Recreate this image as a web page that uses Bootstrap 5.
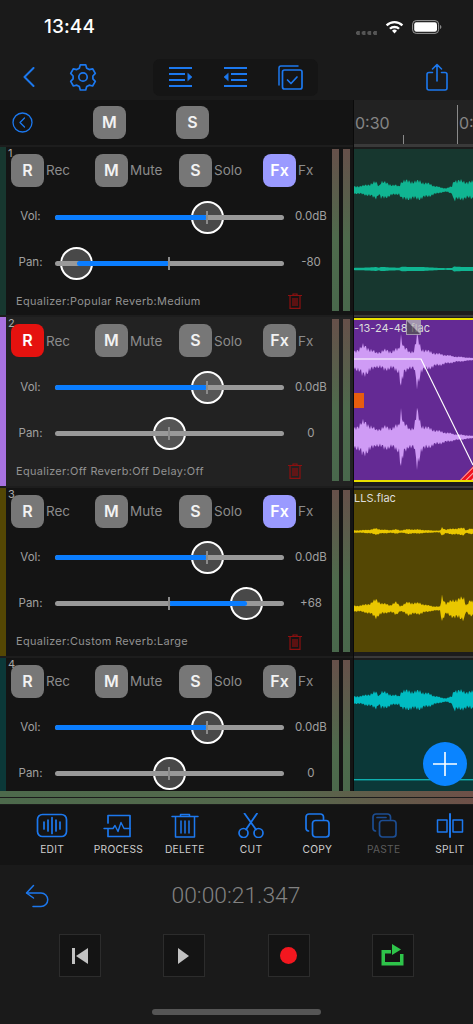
<!DOCTYPE html>
<html lang="en">
<head>
<meta charset="utf-8">
<title>Mixer</title>
<link href="https://cdn.jsdelivr.net/npm/bootstrap@5.3.0/dist/css/bootstrap.min.css" rel="stylesheet">
<style>
html,body{background:#1a1a1a;margin:0;height:1024px;overflow:hidden}
body{font-family:Inter,"Liberation Sans",sans-serif;color:#999;width:473px}
svg{display:block;flex:none}
.ic{fill:none;stroke:#1c78ee;stroke-width:1.7;stroke-linecap:round;stroke-linejoin:round}
.stbar{height:54px;padding:0 31px 0 44px}
.clock{font-size:19px;font-weight:500;color:#fff;letter-spacing:.1px}
.dots{width:22px;height:4px;margin-top:11px;margin-right:7px;background:radial-gradient(circle at 2px 2px,#555 2px,transparent 2.2px) 0 0/5.7px 4px}
.navrow{height:46px;padding-left:23px}
.gearbox{margin-left:34px}
.seg{width:165px;height:37px;margin:0 0 0 56px;background:#151515;border-radius:7px;padding:0 15px}
.sharebox{margin-left:108px}
.stage{height:691px;overflow:hidden}
.mixer{width:354px;border-right:1px solid #0a0a0a;flex:none}
.mixhead{height:45px;background:#141414;padding-left:12px}
.hm{margin-left:60px}
.hs{margin-left:50px}
.tbtn{width:33px;height:33px;border-radius:8px;background:#777;color:#f2f2f2;font-size:16px;font-weight:600;line-height:33px;text-align:center;padding:0;border:0;flex:none}
.tbtn.on-rec{background:#e5120f;color:#fff}
.tbtn.on-fx{background:#9a9aff;color:#fff}
.tr{height:170.3px;background:#141414;border-top:2px solid #1d1d1d}
.tr.sel{background:#222}
.stripe{width:6px;flex:none}
.trbody{width:326px;flex:none}
.num{position:absolute;left:2px;top:0;font-size:11px;line-height:13px;color:#aaa}
.btnline{padding:7px 0 7px 5px;height:47px}
.bgroup{width:84px;flex:none;gap:2px;font-size:13.5px;color:#8b8b8b}
.srow{height:46px}
.slab{width:49px;text-align:center;font-size:11.5px;color:#a0a0a0;flex:none}
.slid{position:relative;width:229px;height:5px;flex:none}
.rail,.fill{position:absolute;top:0;bottom:0;border-radius:3px}
.rail{left:0;right:0;background:#999}
.fill{background:#0a7dff}
.thumb{position:absolute;top:-14px;width:33px;height:33px;margin-left:-16.5px;border-radius:50%;border:2px solid #fff;background:#484848}
.sel .thumb{background:#555}
.tick{position:absolute;top:-4px;width:2px;height:13px;margin-left:-1px;background:#8a8a8a}
.sval{width:48px;padding-left:6px;text-align:center;font-size:11.5px;color:#a0a0a0;flex:none;white-space:nowrap}
.inforow{height:24px;margin-top:3px;padding:0 30px 0 10px;font-size:10.9px;letter-spacing:.35px;color:#929292}
.meters{gap:3.5px;padding:2px 0 0 0;width:21px;flex:none}
.vm{width:7px;height:162px;background:linear-gradient(#66504a,#4e6a4c 55%,#49684c)}
.lanes{width:119px;flex:none;position:relative;background:#202020}
.ruler{height:45px;background:#222;position:relative;border-bottom:1px solid #3a3a3a}
.rt{position:absolute;top:13px;font-size:16px;line-height:20px;color:#858585;white-space:nowrap}
.rmark{position:absolute;width:1px;background:#8a8a8a;bottom:0}
.lane{height:170.3px;padding-top:2px;background:#1c1c1c;border-top:2px solid #3a3a3a;overflow:hidden}
.clip{position:relative;height:162px;overflow:hidden}
.c1{background:#17372f}
.c2{background:#642a94;border-top:2px solid #e8e000;border-bottom:2px solid #e8e000;height:164px;margin-top:-1px}
.c3{background:#544704}
.c4{background:#0b3838;height:140px}
.cname{position:absolute;top:1px;left:0;font-size:11px;line-height:14px;color:#dcdcdc;white-space:nowrap}
.cover{left:52px;opacity:.75}
.fab{position:absolute;left:69px;top:642px;width:44px;height:44px;border-radius:50%;background:#0a84ff;border:0;padding:0}
.hbars{height:14px;background:#1c1c1c}
.hb{height:6px;margin-bottom:1px;background:linear-gradient(90deg,#4d6a4c,#55684c 60%,#6e5048)}
.tools{height:60px;background:#141414;padding-left:19px}
.tool{width:66.3px;flex:none;padding-top:8px;font-size:10.2px;letter-spacing:.25px;color:#cfcfcf;text-align:center}
.tool svg{margin:0 auto 4px}
.tool.off{color:#5c5c5c}
.paste{stroke:#1c4d92}
.timebar{height:66px;padding:0 0 4px 25px}
.timer{flex:1;text-align:center;font-family:Roboto,"Liberation Sans",sans-serif;font-weight:300;font-size:22.8px;color:#828282;margin-right:27px;margin-left:-23px}
.ctrls{padding-left:59px;gap:62.3px;margin-top:3px}
.cbtn{width:42px;height:43px;background:#141414;border:1px solid #2c2c2c;border-radius:0;padding:0}
.homebar{width:169px;height:6px;background:#555;border-radius:3px;margin:32px 0 0 152px}
</style>
</head>
<body>
<div class="stbar d-flex align-items-center">
  <div class="clock">13:44</div>
  <div class="ms-auto d-flex align-items-center">
    <div class="dots"></div>
    <svg width="19" height="14" viewBox="0 0 19 14" class="me-2"><path d="M.8 4.6a12.4 12.4 0 0 1 17.4 0l-1.6 1.7a10 10 0 0 0-14.2 0zM4.1 7.9a7.8 7.8 0 0 1 10.8 0l-1.7 1.7a5.4 5.4 0 0 0-7.4 0zM7 10.8a3.6 3.6 0 0 1 5 0L9.5 13.4z" fill="#fff"/></svg>
    <svg width="30" height="14" viewBox="0 0 30 14"><rect x=".6" y=".6" width="26" height="12.8" rx="3.6" fill="none" stroke="#9a9a9a" stroke-width="1"/><rect x="2.2" y="2.2" width="22.8" height="9.6" rx="2.2" fill="#fff"/><path d="M28 5v4c.8-.3 1.4-1 1.4-2s-.6-1.700-1.400-2z" fill="#888"/></svg>
  </div>
</div>

<div class="navrow d-flex align-items-center">
  <svg width="12" height="20" viewBox="0 0 12 20" class="ic"><path d="M10.500 1 1.500 10l9 9" stroke-width="2"/></svg>
  <svg width="28" height="28" viewBox="0 0 28 28" class="ic gearbox"><path d="M11.300 1.800h5.400l1 3.400 2.500 1.400 3.400-.8 2.700 4.600-2.400 2.600v2.800l2.400 2.600-2.700 4.600-3.400-.8-2.500 1.400-1 3.400h-5.400l-1-3.400-2.500-1.400-3.400.8-2.700-4.600 2.400-2.600v-2.800L1.700 10.400l2.700-4.600 3.400.8 2.500-1.400z"/><circle cx="14" cy="14" r="4.200"/></svg>
  <div class="seg d-flex align-items-center justify-content-between">
    <svg width="25" height="22" viewBox="0 0 25 22" class="ic"><path d="M1 2h23M1 8h16M1 14h16M1 20h23" stroke-width="2" stroke-linecap="butt"/><path d="M20 7.500l4 3.500-4 3.500z" fill="#1c78ee" stroke-width=".6"/></svg>
    <svg width="25" height="22" viewBox="0 0 25 22" class="ic"><path d="M1 2h23M8 8h16M8 14h16M1 20h23" stroke-width="2" stroke-linecap="butt"/><path d="M5 7.500 1 11l4 3.500z" fill="#1c78ee" stroke-width=".6"/></svg>
    <svg width="25" height="25" viewBox="0 0 25 25" class="ic"><path d="M20 1H3a2 2 0 0 0-2 2v17" stroke-width="1.500"/><rect x="4.500" y="5" width="19.500" height="19" rx="2"/><path d="M9.500 15l3.500 3.500 6-6.500"/></svg>
  </div>
  <svg width="22" height="28" viewBox="0 0 22 28" class="ic sharebox"><path d="M6.500 9.500H3a2 2 0 0 0-2 2V25a2 2 0 0 0 2 2h16a2 2 0 0 0 2-2V11.500a2 2 0 0 0-2-2h-3.500M11 18V1.500M6.500 6 11 1.500 15.500 6" stroke-width="1.600"/></svg>
</div>

<div class="stage d-flex position-relative">
  <div class="mixer">
    <div class="mixhead d-flex align-items-center">
      <svg width="21" height="21" viewBox="0 0 21 21" class="ic"><circle cx="10.500" cy="10.500" r="9.500" stroke-width="1.300"/><path d="M12.500 6 8 10.500l4.500 4.500" stroke-width="1.300"/></svg>
      <button class="btn tbtn hm" type="button">M</button>
      <button class="btn tbtn hs" type="button">S</button>
    </div>

    <!-- Track 1 -->
    <div class="tr d-flex">
      <div class="stripe c1"></div>
      <div class="trbody position-relative">
        <span class="num">1</span>
        <div class="btnline d-flex">
          <div class="bgroup d-flex align-items-center"><button class="btn tbtn" type="button">R</button><span>Rec</span></div>
          <div class="bgroup d-flex align-items-center"><button class="btn tbtn" type="button">M</button><span>Mute</span></div>
          <div class="bgroup d-flex align-items-center"><button class="btn tbtn" type="button">S</button><span>Solo</span></div>
          <div class="bgroup d-flex align-items-center"><button class="btn tbtn on-fx" type="button">Fx</button><span>Fx</span></div>
        </div>
        <div class="srow d-flex align-items-center"><div class="slab">Vol:</div>
          <div class="slid"><div class="thumb" style="left:66.4%"></div><div class="rail"></div><div class="fill" style="left:0;width:66.4%"></div><div class="tick" style="left:66.4%"></div></div>
          <div class="sval">0.0dB</div></div>
        <div class="srow d-flex align-items-center"><div class="slab">Pan:</div>
          <div class="slid"><div class="thumb" style="left:9.6%"></div><div class="rail"></div><div class="fill" style="left:9.6%;width:40.2%"></div><div class="tick" style="left:49.8%"></div></div>
          <div class="sval">-80</div></div>
        <div class="inforow d-flex align-items-center justify-content-between"><span>Equalizer:Popular Reverb:Medium</span>
          <svg width="14" height="16" viewBox="0 0 14 16" fill="none" stroke="#8c1010" stroke-width="1.200"><path d="M0 2.500h14M5 2.500V1h4v1.500M2 2.500V15.300h10V2.500M5 5v8M7 5v8M9 5v8"/></svg></div>
      </div>
      <div class="meters d-flex"><div class="vm"></div><div class="vm"></div></div>
    </div>

    <!-- Track 2 -->
    <div class="tr sel d-flex">
      <div class="stripe" style="background:#a872e0"></div>
      <div class="trbody position-relative">
        <span class="num">2</span>
        <div class="btnline d-flex">
          <div class="bgroup d-flex align-items-center"><button class="btn tbtn on-rec" type="button">R</button><span>Rec</span></div>
          <div class="bgroup d-flex align-items-center"><button class="btn tbtn" type="button">M</button><span>Mute</span></div>
          <div class="bgroup d-flex align-items-center"><button class="btn tbtn" type="button">S</button><span>Solo</span></div>
          <div class="bgroup d-flex align-items-center"><button class="btn tbtn" type="button">Fx</button><span>Fx</span></div>
        </div>
        <div class="srow d-flex align-items-center"><div class="slab">Vol:</div>
          <div class="slid"><div class="thumb" style="left:66.4%"></div><div class="rail"></div><div class="fill" style="left:0;width:66.4%"></div><div class="tick" style="left:66.4%"></div></div>
          <div class="sval">0.0dB</div></div>
        <div class="srow d-flex align-items-center"><div class="slab">Pan:</div>
          <div class="slid"><div class="thumb" style="left:49.8%"></div><div class="rail"></div><div class="tick" style="left:49.8%"></div></div>
          <div class="sval">0</div></div>
        <div class="inforow d-flex align-items-center justify-content-between"><span>Equalizer:Off Reverb:Off Delay:Off</span>
          <svg width="14" height="16" viewBox="0 0 14 16" fill="none" stroke="#8c1010" stroke-width="1.200"><path d="M0 2.500h14M5 2.500V1h4v1.500M2 2.500V15.300h10V2.500M5 5v8M7 5v8M9 5v8"/></svg></div>
      </div>
      <div class="meters d-flex"><div class="vm"></div><div class="vm"></div></div>
    </div>

    <!-- Track 3 -->
    <div class="tr d-flex">
      <div class="stripe c3"></div>
      <div class="trbody position-relative">
        <span class="num">3</span>
        <div class="btnline d-flex">
          <div class="bgroup d-flex align-items-center"><button class="btn tbtn" type="button">R</button><span>Rec</span></div>
          <div class="bgroup d-flex align-items-center"><button class="btn tbtn" type="button">M</button><span>Mute</span></div>
          <div class="bgroup d-flex align-items-center"><button class="btn tbtn" type="button">S</button><span>Solo</span></div>
          <div class="bgroup d-flex align-items-center"><button class="btn tbtn on-fx" type="button">Fx</button><span>Fx</span></div>
        </div>
        <div class="srow d-flex align-items-center"><div class="slab">Vol:</div>
          <div class="slid"><div class="thumb" style="left:66.4%"></div><div class="rail"></div><div class="fill" style="left:0;width:66.4%"></div><div class="tick" style="left:66.4%"></div></div>
          <div class="sval">0.0dB</div></div>
        <div class="srow d-flex align-items-center"><div class="slab">Pan:</div>
          <div class="slid"><div class="thumb" style="left:83.8%"></div><div class="rail"></div><div class="fill" style="left:49.8%;width:34%"></div><div class="tick" style="left:49.8%"></div></div>
          <div class="sval">+68</div></div>
        <div class="inforow d-flex align-items-center justify-content-between"><span>Equalizer:Custom Reverb:Large</span>
          <svg width="14" height="16" viewBox="0 0 14 16" fill="none" stroke="#8c1010" stroke-width="1.200"><path d="M0 2.500h14M5 2.500V1h4v1.500M2 2.500V15.300h10V2.500M5 5v8M7 5v8M9 5v8"/></svg></div>
      </div>
      <div class="meters d-flex"><div class="vm"></div><div class="vm"></div></div>
    </div>

    <!-- Track 4 -->
    <div class="tr d-flex">
      <div class="stripe c4"></div>
      <div class="trbody position-relative">
        <span class="num">4</span>
        <div class="btnline d-flex">
          <div class="bgroup d-flex align-items-center"><button class="btn tbtn" type="button">R</button><span>Rec</span></div>
          <div class="bgroup d-flex align-items-center"><button class="btn tbtn" type="button">M</button><span>Mute</span></div>
          <div class="bgroup d-flex align-items-center"><button class="btn tbtn" type="button">S</button><span>Solo</span></div>
          <div class="bgroup d-flex align-items-center"><button class="btn tbtn" type="button">Fx</button><span>Fx</span></div>
        </div>
        <div class="srow d-flex align-items-center"><div class="slab">Vol:</div>
          <div class="slid"><div class="thumb" style="left:66.4%"></div><div class="rail"></div><div class="fill" style="left:0;width:66.4%"></div><div class="tick" style="left:66.4%"></div></div>
          <div class="sval">0.0dB</div></div>
        <div class="srow d-flex align-items-center"><div class="slab">Pan:</div>
          <div class="slid"><div class="thumb" style="left:49.8%"></div><div class="rail"></div><div class="tick" style="left:49.8%"></div></div>
          <div class="sval">0</div></div>
      </div>
      <div class="meters d-flex"><div class="vm"></div><div class="vm"></div></div>
    </div>
  </div>

  <div class="lanes">
    <div class="ruler"><span class="rt" style="left:1px">0:30</span><span class="rt" style="left:105px">0:</span>
      <div class="rmark" style="left:49px;height:9px"></div><div class="rmark" style="left:103px;height:39px"></div></div>

    <div class="lane"><div class="clip c1"><svg width="119" height="162" id="w1"></svg></div></div>

    <div class="lane"><div class="clip c2"><svg width="119" height="160" id="w2"></svg>
      <span class="cname">-13-24-48 flac</span>
      <svg width="15" height="15" viewBox="0 0 15 15" class="position-absolute top-0 cover"><rect width="15" height="15" fill="#b9b9b9"/><path d="M1 1 14 14H1z" fill="#555"/></svg>
    </div></div>

    <div class="lane"><div class="clip c3"><svg width="119" height="162" id="w3"></svg><span class="cname">LLS.flac</span></div></div>

    <div class="lane"><div class="clip c4"><svg width="119" height="140" id="w4"></svg></div></div>

    <button class="fab" type="button" aria-label="Add"><svg width="44" height="44" viewBox="0 0 44 44"><path d="M22 10v24M10 22h24" stroke="#fff" stroke-width="1.600"/></svg></button>
  </div>
</div>

<div class="hbars"><div class="hb"></div><div class="hb"></div></div>

<div class="tools d-flex">
  <div class="tool"><svg width="34" height="25" viewBox="0 0 34 25" class="ic"><rect x="2.500" y="1.500" width="29" height="22" rx="5"/><path d="M9 9v7M13 7v11M17 4.500v16M21 7v11M25 9v7"/></svg>EDIT</div>
  <div class="tool"><svg width="30" height="25" viewBox="0 0 30 25" class="ic"><path d="M5 10V2.500h22v21H5v-7"/><path d="M1 15.500h9l2-3 3 6 3-9 3 6h6" stroke-width="1.400"/></svg>PROCESS</div>
  <div class="tool"><svg width="30" height="25" viewBox="0 0 30 25" class="ic"><path d="M2 3.500h26M10.500 3.500V1.500h9v2M5.500 3.500V24h19V3.500M11 8v12M15 8v12M19 8v12" stroke-width="1.500"/></svg>DELETE</div>
  <div class="tool"><svg width="28" height="25" viewBox="0 0 28 25" class="ic"><circle cx="6.500" cy="20" r="4.500"/><circle cx="21.500" cy="20" r="4.500"/><path d="M9 16.500 20 .5M19 16.500 7.500.5" stroke-width="1.800"/></svg>CUT</div>
  <div class="tool"><svg width="26" height="25" viewBox="0 0 26 25" class="ic"><path d="M19.500 6.500V4a3 3 0 0 0-3-3H5A3 3 0 0 0 2 4v11a3 3 0 0 0 2.500 3"/><rect x="8.500" y="7.500" width="16.500" height="16.500" rx="3"/></svg>COPY</div>
  <div class="tool off"><svg width="26" height="25" viewBox="0 0 26 25" class="ic paste"><path d="M19.500 6.500V4a3 3 0 0 0-3-3H5A3 3 0 0 0 2 4v11a3 3 0 0 0 2.500 3M6 4.500h9"/><rect x="8.500" y="7.500" width="16.500" height="16.500" rx="3"/></svg>PASTE</div>
  <div class="tool"><svg width="28" height="25" viewBox="0 0 28 25" class="ic"><path d="M14 1v23" stroke-width="2"/><path d="M1.500 7h9.500v12H1.500zM17 7h9.500v12H17z" stroke-width="1.500"/></svg>SPLIT</div>
</div>

<div class="timebar d-flex align-items-center">
  <svg width="24" height="24" viewBox="0 0 24 24" class="ic"><path d="M8.500 1.500 1.500 9l7 5" stroke-width="1.500"/><path d="M2 9h14a6.500 6.500 0 0 1 0 13.500H8" stroke-width="1.500"/></svg>
  <div class="timer">00:00:21.347</div>
</div>

<div class="ctrls d-flex">
  <button class="btn cbtn d-flex align-items-center justify-content-center" type="button" aria-label="Start"><svg width="16" height="16" viewBox="0 0 16 16"><path d="M0 0h3v16H0zM16 0v16L4 8z" fill="#c2c2c2"/></svg></button>
  <button class="btn cbtn d-flex align-items-center justify-content-center" type="button" aria-label="Play"><svg width="12" height="16" viewBox="0 0 12 16"><path d="M0 0l11 8-11 8z" fill="#c2c2c2"/></svg></button>
  <button class="btn cbtn d-flex align-items-center justify-content-center" type="button" aria-label="Record"><svg width="17" height="17" viewBox="0 0 17 17"><circle cx="8.500" cy="8.500" r="8.500" fill="#f3171f"/></svg></button>
  <button class="btn cbtn d-flex align-items-center justify-content-center" type="button" aria-label="Loop"><svg width="25" height="23" viewBox="0 0 25 23"><path d="M11 6H1.500v15.500h22V10H20v8H5V9.500h6z" fill="#2ec44a"/><path d="M12 0l9 5.500-9 5.500z" fill="#2ec44a"/></svg></button>
</div>
<div class="homebar"></div>

<script>
(function(){
  var NS='http://www.w3.org/2000/svg';
  function env(k,x){for(var i=0;i<k.length-1;i++){if(x<=k[i+1][0]){var t=(x-k[i][0])/(k[i+1][0]-k[i][0]);return k[i][1]+(k[i+1][1]-k[i][1])*t;}}return k[k.length-1][1];}
  function jit(x){return 0.82+0.18*Math.sin(x*2.3)+0.1*Math.sin(x*5.7+1);}
  function wave(id,k,cy,up,dn,col,rough){
    var s=document.getElementById(id),top=[],bot=[];
    for(var x=0;x<=119;x+=1){var a=env(k,x),j=rough?jit(x):1;top.push(x+','+(cy-a*up*j).toFixed(1));bot.unshift(x+','+(cy+a*dn*(rough?jit(x+9):1)).toFixed(1));}
    var p=document.createElementNS(NS,'polygon');p.setAttribute('points',top.concat(bot).join(' '));p.setAttribute('fill',col);s.appendChild(p);
  }
  function add(id,tag,attrs){var e=document.createElementNS(NS,tag);for(var a in attrs)e.setAttribute(a,attrs[a]);document.getElementById(id).appendChild(e);return e;}
  var main=[[0,4],[10,5],[16,7],[22,9],[25,5],[27,10],[38,6],[45,4.500],[48,11],[55,10],[66,10],[75,7],[86,3],[92,2],[98,4],[100,12],[108,10],[119,9]];
  wave('w1',main,41,1,1,'#10b592',true);
  wave('w1',main.map(function(p){return [p[0],p[1]*.16+.5];}),120,1,1,'#10b592',false);
  wave('w4',main,40,1,1,'#00bcc2',true);
  add('w4','rect',{x:0,y:119,width:119,height:1.400,fill:'#0fb0b0'});
  var pur=[[0,8],[8,15],[14,13],[22,7],[30,10],[38,9],[45,12],[47,28],[50,14],[55,8],[60,10],[63,26],[67,12],[74,9],[84,6],[100,3],[115,1.500],[119,1]];
  wave('w2',pur,39,1,1.200,'#cf9bf5',true);
  wave('w2',pur,117,1.150,1.300,'#cf9bf5',true);
  add('w2','path',{d:'M0 39H67L119 145',fill:'none',stroke:'#fff','stroke-width':1.200});
  add('w2','rect',{x:0,y:73,width:10,height:15,fill:'#e85d0e'});
  var d=add('w2','defs',{});
  d.innerHTML='<pattern id="hx" width="4" height="4" patternUnits="userSpaceOnUse" patternTransform="rotate(-45)"><rect width="4" height="4" fill="#f0141c"/><rect width="4" height="1" fill="#ffb0b0"/></pattern>';
  add('w2','polygon',{points:'119,146 119,162 104,162',fill:'url(#hx)'});
  var yb=[[0,3],[10,4],[16,6],[22,10],[28,6],[36,4],[42,7],[46,3],[54,7],[66,6],[76,3],[86,2],[88,14],[92,6],[100,10],[110,12],[112,4],[116,9],[119,7]];
  wave('w3',yb.map(function(p){return [p[0],p[1]*.3+.4];}),41.5,1,1,'#eac700',true);
  wave('w3',yb,118.5,1,1,'#eac700',true);
})();
</script>
</body>
</html>
